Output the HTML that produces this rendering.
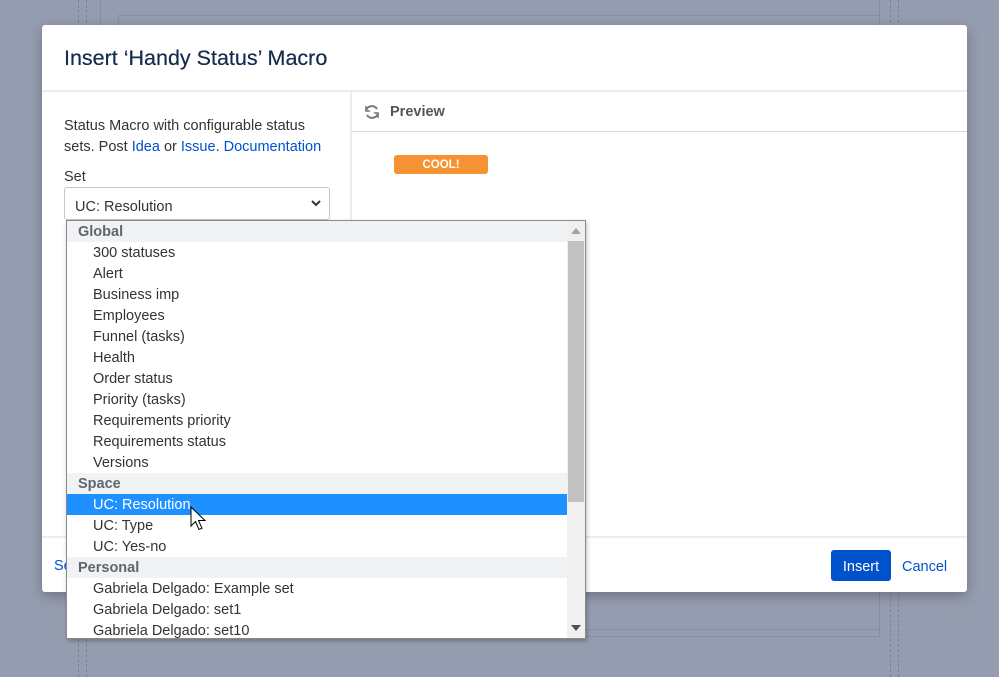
<!DOCTYPE html>
<html><head><style>
*{box-sizing:border-box;margin:0;padding:0}
body{width:999px;height:677px;background:#949caf;font-family:"Liberation Sans",sans-serif;position:relative;overflow:hidden}
.dl{position:absolute;top:0;bottom:0;border-left:1px dashed #7b8396}
.dlg{position:absolute;left:42px;top:25px;width:925px;height:567px;background:#fff;border-radius:3px;box-shadow:0 4px 12px rgba(0,0,0,.25)}
.abs{position:absolute}
.dd{position:absolute;left:66px;top:220px;width:520px;height:419px;background:#fff;border:1px solid #8a8a8a;box-shadow:1px 2px 4px rgba(0,0,0,.25);overflow:hidden}
.r{height:21px;line-height:22px;font-size:14.5px;color:#333;padding-left:26px}
.h{padding-left:11px;background:#f1f2f4;color:#5e6670;font-weight:bold}
.sel{background:#1e90ff;color:#fff}
</style></head><body>
<div class="dl" style="left:78px"></div><div class="dl" style="left:86px"></div>
<div class="dl" style="left:890px"></div><div class="dl" style="left:898px"></div>
<div class="abs" style="left:100px;top:0;width:780px;height:637px;border:1px solid #868ea1;border-top:none"></div>
<div class="abs" style="left:118px;top:15px;width:762px;height:615px;border:1px solid #868ea1"></div>
<div class="dlg">
 <div class="abs" style="left:22px;top:21px;font-size:21.5px;color:#172b4d;text-shadow:0 0 0.4px #172b4d">Insert ‘Handy Status’ Macro</div>
 <div class="abs" style="left:0;top:65px;width:925px;height:2px;background:#ebecf0"></div>
 <div class="abs" style="left:308px;top:67px;width:2px;height:445px;background:#ebecf0"></div>
 <div class="abs" style="left:310px;top:106px;width:615px;height:1px;background:#d5d7db"></div>
 <svg class="abs" style="left:321px;top:78px" width="18" height="18" viewBox="0 0 18 18" fill="none" stroke="#777" stroke-width="2"><path d="M14 6A6 6 0 0 0 3 8"/><path d="M4 12a6 6 0 0 0 11-2"/><path d="M3 3v5h4" stroke-width="1.6"/><path d="M15 15v-5h-4" stroke-width="1.6"/></svg>
 <div class="abs" style="left:348px;top:79px;font-size:14.5px;font-weight:bold;color:#555">Preview</div>
 <div class="abs" style="left:352px;top:130px;width:94px;height:19px;background:#f79232;border-radius:3px;color:#fff;font-size:11.5px;font-weight:bold;text-align:center;line-height:20px">COOL!</div>
 <div class="abs" style="left:22px;top:91px;font-size:14.5px;line-height:21px;color:#333;width:270px">Status Macro with configurable status sets. Post <span style="color:#0052cc">Idea</span> or <span style="color:#0052cc">Issue</span>. <span style="color:#0052cc">Documentation</span></div>
 <div class="abs" style="left:22px;top:144px;font-size:14.5px;color:#333">Set</div>
 <div class="abs" style="left:22px;top:162px;width:266px;height:33px;border:1px solid #c1c7d0;border-radius:3px;font-size:14.5px;color:#333;padding:11px 0 0 10px">UC: Resolution
  <svg class="abs" style="left:246px;top:12px" width="10" height="7" viewBox="0 0 10 7"><path d="M1 1l4 4 4-4" stroke="#333" stroke-width="2" fill="none"/></svg></div>
 <div class="abs" style="left:0;top:511px;width:925px;height:2px;background:#ebecf0"></div>
 <div class="abs" style="left:12px;top:533px;font-size:14.5px;color:#0052cc">Se</div>
 <div class="abs" style="left:789px;top:525px;width:60px;height:31px;background:#0052cc;border-radius:3px;color:#fff;font-size:14.5px;text-align:center;line-height:34px">Insert</div>
 <div class="abs" style="left:860px;top:534px;font-size:14.5px;color:#0052cc">Cancel</div>
</div>
<div class="dd">
 <div class="r h">Global</div>
 <div class="r">300 statuses</div><div class="r">Alert</div><div class="r">Business imp</div><div class="r">Employees</div><div class="r">Funnel (tasks)</div><div class="r">Health</div><div class="r">Order status</div><div class="r">Priority (tasks)</div><div class="r">Requirements priority</div><div class="r">Requirements status</div><div class="r">Versions</div>
 <div class="r h">Space</div>
 <div class="r sel">UC: Resolution</div><div class="r">UC: Type</div><div class="r">UC: Yes-no</div>
 <div class="r h">Personal</div>
 <div class="r">Gabriela Delgado: Example set</div><div class="r">Gabriela Delgado: set1</div><div class="r">Gabriela Delgado: set10</div>
 <div class="abs" style="left:500px;top:0;width:18px;height:417px;background:#f0f0f0"></div>
 <div class="abs" style="left:501px;top:20px;width:16px;height:261px;background:#c1c1c1"></div>
 <svg class="abs" style="left:504px;top:7px" width="10" height="6"><path d="M0 6L5 0 10 6z" fill="#a3a3a3"/></svg>
 <svg class="abs" style="left:504px;top:404px" width="10" height="6"><path d="M0 0L5 6 10 0z" fill="#505050"/></svg>
</div>
<svg class="abs" style="left:190px;top:506px" width="20" height="26" viewBox="0 0 20 26"><path d="M1 1v19l4.5-4.5 3.5 8 3-1.3-3.5-7.7H15z" fill="#fff" stroke="#000" stroke-width="1"/></svg>
</body></html>
